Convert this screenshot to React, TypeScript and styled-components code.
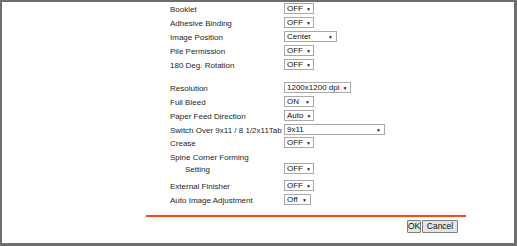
import styled, { createGlobalStyle } from "styled-components";

type Item = {
  label: string;
  value?: string;
  width?: number;
  indent?: boolean;
  gapBefore?: number;
  height?: number;
};

const items: Item[] = [
  { label: "Booklet", value: "OFF", width: 30 },
  { label: "Adhesive Binding", value: "OFF", width: 30 },
  { label: "Image Position", value: "Center", width: 53 },
  { label: "Pile Permission", value: "OFF", width: 30 },
  { label: "180 Deg. Rotation", value: "OFF", width: 30 },
  { label: "Resolution", value: "1200x1200 dpi", width: 67, gapBefore: 9 },
  { label: "Full Bleed", value: "ON", width: 30 },
  { label: "Paper Feed Direction", value: "Auto", width: 30 },
  { label: "Switch Over 9x11 / 8 1/2x11Tab", value: "9x11", width: 101, height: 13 },
  { label: "Crease", value: "OFF", width: 30 },
  { label: "Spine Corner Forming", height: 12 },
  { label: "Setting", value: "OFF", width: 30, indent: true, height: 17 },
  { label: "External Finisher", value: "OFF", width: 30 },
  { label: "Auto Image Adjustment", value: "Off", width: 27 },
];

const App = () => {
  return (
    <>
      <GlobalStyle />
      <Frame>
        <Panel>
          <Form>
            {items.map((item) => (
              <Row
                key={item.label}
                $gap={item.gapBefore ?? 0}
                $height={item.height ?? 14}
              >
                <Label $indent={!!item.indent}>{item.label}</Label>
                {item.value && (
                  <Select $width={item.width ?? 30}>
                    <span>{item.value}</span>
                    <Caret>▼</Caret>
                  </Select>
                )}
              </Row>
            ))}
          </Form>
          <Divider />
          <Buttons>
            <Button $width={14}>OK</Button>
            <Button $width={36}>Cancel</Button>
          </Buttons>
        </Panel>
      </Frame>
    </>
  );
};

export default App;

const GlobalStyle = createGlobalStyle`
  html, body {
    margin: 0;
    padding: 0;
    background: #ffffff;
  }

  body {
    font-family: "Liberation Sans", Arial, sans-serif;
  }
`;

const Frame = styled.div`
  box-sizing: border-box;
  width: 517px;
  height: 246px;
  border-style: solid;
  border-color: #6e6e6e;
  border-width: 2px 3px 3px 2px;
  background: #ffffff;
  overflow: hidden;
`;

const Panel = styled.div`
  display: flex;
  flex-direction: column;
  width: 320px;
  margin-left: 144px;
`;

const Form = styled.div`
  display: flex;
  flex-direction: column;
  padding-left: 24px;
`;

const Row = styled.div<{ $gap: number; $height: number }>`
  display: grid;
  grid-template-columns: 114px auto;
  align-items: start;
  height: ${(p) => p.$height}px;
  margin-top: ${(p) => p.$gap}px;
`;

const Label = styled.span<{ $indent: boolean }>`
  padding: 1px 0 0 ${(p) => (p.$indent ? 15 : 0)}px;
  font-size: 8px;
  line-height: 14px;
  color: #1e1e1e;
  white-space: nowrap;
`;

const Select = styled.div<{ $width: number }>`
  box-sizing: border-box;
  display: flex;
  align-items: center;
  justify-content: space-between;
  width: ${(p) => p.$width}px;
  height: 11px;
  margin-top: 1px;
  padding: 0 3px 0 2px;
  border: 1px solid #a9a9a9;
  background: #ffffff;
  font-size: 8px;
  line-height: 9px;
  color: #111111;
  white-space: nowrap;
`;

const Caret = styled.span`
  font-size: 5px;
  line-height: 6px;
  color: #222222;
  margin-left: 3px;
`;

const Divider = styled.div`
  height: 2px;
  margin-top: 8px;
  background: #f0501e;
  box-shadow: 0 0 1px #f7906e;
`;

const Buttons = styled.div`
  display: flex;
  justify-content: flex-end;
  gap: 1px;
  padding: 3px 8px 0 0;
`;

const Button = styled.button<{ $width: number }>`
  box-sizing: border-box;
  width: ${(p) => p.$width}px;
  height: 13px;
  padding: 0;
  border: 1px solid #7d7d7d;
  border-radius: 1px;
  background: #e4e4e4;
  font-family: "Liberation Sans", Arial, sans-serif;
  font-size: 8.5px;
  line-height: 11px;
  color: #111111;
`;
